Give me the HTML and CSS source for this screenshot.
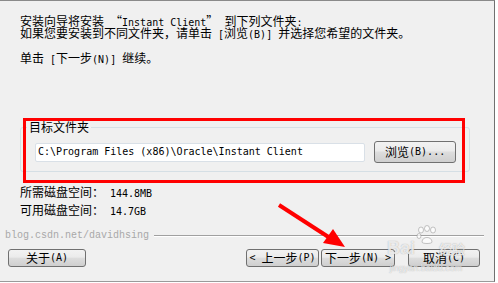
FILE: index.html
```html
<!DOCTYPE html>
<html lang="zh-CN">
<head>
    <meta charset="UTF-8">
    <title>Instant Client - 选择安装文件夹</title>
    <link rel="stylesheet" href="styles.css">
</head>
<body>

<div class="dialog">
    <div class="intro">
        <p>安装向导将安装<span class="en"> </span><span class="q q-open">“</span><span class="en">Instant Client</span><span class="q q-close">”</span><span class="en"> </span>到下列文件夹<span class="en">:</span><br>如果您要安装到不同文件夹，请单击<span class="en"> [</span>浏览<span class="en">(B)] </span>并选择您希望的文件夹。</p>
        <p class="next-hint">单击<span class="en"> [</span>下一步<span class="en">(N)] </span>继续。</p>
    </div>

    <fieldset class="target">
        <legend>目标文件夹</legend>
        <div class="path-row">
            <div class="path-input"><span class="en">C:\Program Files (x86)\Oracle\Instant Client</span></div>
            <button class="btn browse">浏览<span class="en">(B)...</span></button>
        </div>
    </fieldset>

    <div class="disk">
        <p><span class="disk-label">所需磁盘空间：</span><span class="en">144.8MB</span></p>
        <p><span class="disk-label">可用磁盘空间：</span><span class="en">14.7GB</span></p>
    </div>

    <div class="brand-line">
        <span class="brand">blog.csdn.net/davidhsing</span>
        <span class="rule"></span>
    </div>

    <div class="actions">
        <button class="btn about">关于<span class="en">(A)</span></button>
        <button class="btn back"><span class="en">&lt;&nbsp;</span>上一步<span class="en">(P)</span></button>
        <button class="btn next">下一步<span class="en">(N) &gt;</span></button>
        <button class="btn cancel">取消<span class="en">(C)</span></button>
    </div>

    <!-- Markierung aus dem Screenshot -->
    <div class="highlight"></div>
    <svg class="arrow" width="495" height="282" viewBox="0 0 495 282">
        <line x1="279" y1="205" x2="330" y2="238" stroke="#ff0000" stroke-width="4"/>
        <polygon points="345,247 323,243 333,229" fill="#ff0000"/>
    </svg>

    <div class="watermark">
        <div class="wm-logo">
            <span>Bai</span>
            <svg class="paw" width="22" height="20" viewBox="0 0 22 20">
                <g fill="rgba(255,255,255,0.75)" stroke="rgba(140,140,140,0.5)" stroke-width="1">
                    <ellipse cx="5" cy="5" rx="2.5" ry="3"/>
                    <ellipse cx="11" cy="3.5" rx="2.5" ry="3"/>
                    <ellipse cx="17" cy="5" rx="2.5" ry="3"/>
                    <ellipse cx="3" cy="11" rx="2" ry="2.5"/>
                    <path d="M6 17 C6 11 16 11 16 17 C16 19 6 19 6 17 Z"/>
                </g>
            </svg>
            <span class="wm-cn">经验</span>
        </div>
        <span class="wm-url">jingyan.baidu.com</span>
    </div>
</div>

</body>
</html>
```

FILE: styles.css
```css
body {
    margin: 0;
    background: #fff;
    font-family: "Noto Sans CJK SC", sans-serif;
    font-size: 12px;
    color: #000;
}

.dialog {
    position: relative;
    box-sizing: border-box;
    width: 495px;
    height: 282px;
    background: #f0f0f0;
    border-top: 1px solid #8a8a8a;
    border-right: 1px solid #707070;
    border-bottom: 1px solid #9a9a9a;
    overflow: hidden;
}

.en {
    font-family: "DejaVu Sans Mono", monospace;
    font-size: 10px;
    line-height: 0;
    white-space: pre;
}

.q {
    display: inline-block;
    width: 12px;
    line-height: 0;
}

.q-open {
    text-align: right;
}

.q-close {
    text-align: left;
}

.intro {
    padding: 14px 0 0 20px;
    line-height: 12px;
}

.intro p {
    margin: 0;
}

.intro .next-hint {
    margin-top: 13px;
}

.target {
    box-sizing: border-box;
    width: 450px;
    min-inline-size: 0;
    margin: 57px 0 0 20px;
    padding: 8px 13px 8px 14px;
    border: 1px solid #d5dfe5;
    border-radius: 3px;
}

.target legend {
    padding: 0 2px;
    margin-left: -8px;
    line-height: 12px;
}

.path-row {
    display: flex;
    align-items: center;
    gap: 9px;
}

.path-input {
    box-sizing: border-box;
    width: 331px;
    height: 19px;
    padding: 0 2px;
    background: #fff;
    border: 1px solid #d9e0e7;
    border-radius: 2px;
    display: flex;
    align-items: center;
}

.btn {
    box-sizing: border-box;
    height: 18px;
    padding: 0;
    border: 1px solid #707070;
    border-radius: 3px;
    background: linear-gradient(#f2f2f2, #ebebeb 45%, #dddddd 50%, #cfcfcf);
    font-family: inherit;
    font-size: 12px;
    line-height: 12px;
    color: #000;
    display: flex;
    align-items: center;
    justify-content: center;
}

.browse {
    width: 82px;
    height: 22px;
}

.disk {
    margin: 14px 0 0 20px;
    line-height: 12px;
}

.disk p {
    margin: 0 0 6px;
}

.disk-label {
    display: inline-block;
    width: 90px;
}

.brand-line {
    display: flex;
    align-items: center;
    margin-top: 14px;
    padding: 0 10px 0 5px;
    height: 12px;
}

.brand {
    color: #a8a8a8;
    font-family: "Liberation Mono", monospace;
    font-size: 10px;
    line-height: 12px;
}

.rule {
    flex: 1;
    margin-left: 5px;
    border-top: 1px solid #a0a0a0;
    border-bottom: 1px solid #fff;
}

.actions {
    display: flex;
    margin-top: 7px;
    padding: 0 14px 0 8px;
}

.about {
    width: 78px;
}

.back {
    width: 73px;
    margin-left: auto;
}

.next {
    width: 74px;
    margin-left: 2px;
}

.cancel {
    width: 72px;
    margin-left: 13px;
}

/* Markierung */
.highlight {
    position: absolute;
    left: 23px;
    top: 117px;
    width: 436px;
    height: 59px;
    border: 3px solid #ff0000;
}

.arrow {
    position: absolute;
    left: 0;
    top: -1px;
    pointer-events: none;
}

.watermark {
    position: absolute;
    left: 378px;
    top: 224px;
    width: 96px;
    display: flex;
    flex-direction: column;
    align-items: center;
    color: rgba(255, 255, 255, 0.75);
    text-shadow: 0 0 1px rgba(110, 110, 110, 0.6);
    pointer-events: none;
}

.wm-logo {
    display: flex;
    align-items: flex-end;
    font-family: "Liberation Sans", sans-serif;
    font-size: 18px;
    font-weight: bold;
    line-height: 18px;
}

.paw {
    margin: 0 1px 12px;
}

.wm-cn {
    font-family: "Noto Sans CJK SC", sans-serif;
    font-size: 13px;
    line-height: 16px;
}

.wm-url {
    margin-top: 6px;
    font-family: "Liberation Sans", sans-serif;
    font-size: 9px;
    line-height: 10px;
}
```
